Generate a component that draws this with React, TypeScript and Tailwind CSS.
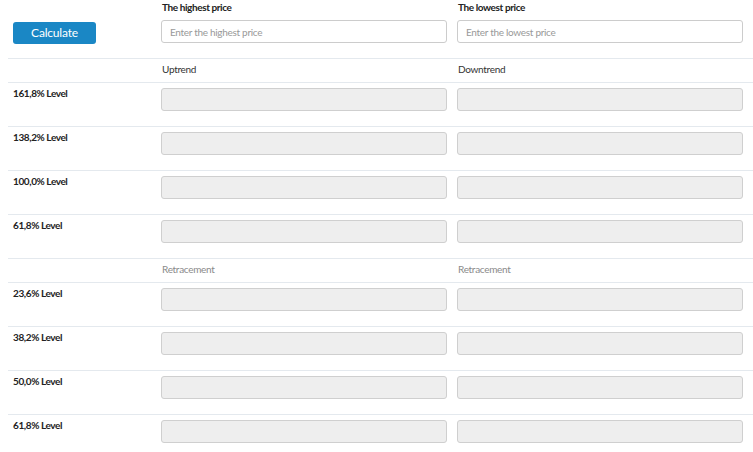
const font = { fontFamily: 'Lato, "Liberation Sans", sans-serif' };

function Row({ label }: { label: string }) {
  return (
    <div className="flex h-[44px] border-t border-[#e4e9ee]">
      <div className="w-[153px] pl-[5px] pt-[3px] text-[10px] leading-[14px] font-bold tracking-[-0.4px] text-[#222]">
        {label}
      </div>
      <div className="w-[286px] pt-[5px]">
        <div className="h-[23px] rounded-[3px] border border-[#cfcfcf] bg-[#eeeeee]" />
      </div>
      <div className="ml-[10px] w-[286px] pt-[5px]">
        <div className="h-[23px] rounded-[3px] border border-[#cfcfcf] bg-[#eeeeee]" />
      </div>
    </div>
  );
}

function Header({ left, right, muted }: { left: string; right: string; muted?: boolean }) {
  const color = muted ? 'text-[#8a8a8a]' : 'text-[#333]';
  return (
    <div className={`flex h-[24px] items-center border-t border-[#e4e9ee] pb-[2px] text-[10px] tracking-[-0.3px] ${color}`}>
      <div className="w-[153px]" />
      <div className="w-[286px] pl-[1px]">{left}</div>
      <div className="ml-[10px] w-[286px] pl-[1px]">{right}</div>
    </div>
  );
}

export default function App() {
  return (
    <div className="min-h-screen bg-white pl-[8px]" style={font}>
      <div className="flex h-[58px]">
        <div className="w-[153px] pl-[5px] pt-[22px]">
          <button className="block h-[22px] w-[83px] rounded-[3px] bg-[#1a87c5] text-[12px] tracking-[-0.2px] text-white">
            Calculate
          </button>
        </div>
        <div className="w-[286px]">
          <div className="h-[16px] pl-[1px] text-[10px] leading-[14px] font-bold tracking-[-0.4px] text-[#222]">
            The highest price
          </div>
          <input
            placeholder="Enter the highest price"
            className="mt-[4px] block h-[23px] w-full rounded-[3px] border border-[#cccccc] px-[8px] text-[10px] tracking-[-0.3px] placeholder:text-[#999]"
          />
        </div>
        <div className="ml-[10px] w-[286px]">
          <div className="h-[16px] pl-[1px] text-[10px] leading-[14px] font-bold tracking-[-0.4px] text-[#222]">
            The lowest price
          </div>
          <input
            placeholder="Enter the lowest price"
            className="mt-[4px] block h-[23px] w-full rounded-[3px] border border-[#cccccc] px-[8px] text-[10px] tracking-[-0.3px] placeholder:text-[#999]"
          />
        </div>
      </div>
      <Header left="Uptrend" right="Downtrend" />
      <Row label="161,8% Level" />
      <Row label="138,2% Level" />
      <Row label="100,0% Level" />
      <Row label="61,8% Level" />
      <Header left="Retracement" right="Retracement" muted />
      <Row label="23,6% Level" />
      <Row label="38,2% Level" />
      <Row label="50,0% Level" />
      <Row label="61,8% Level" />
    </div>
  );
}
